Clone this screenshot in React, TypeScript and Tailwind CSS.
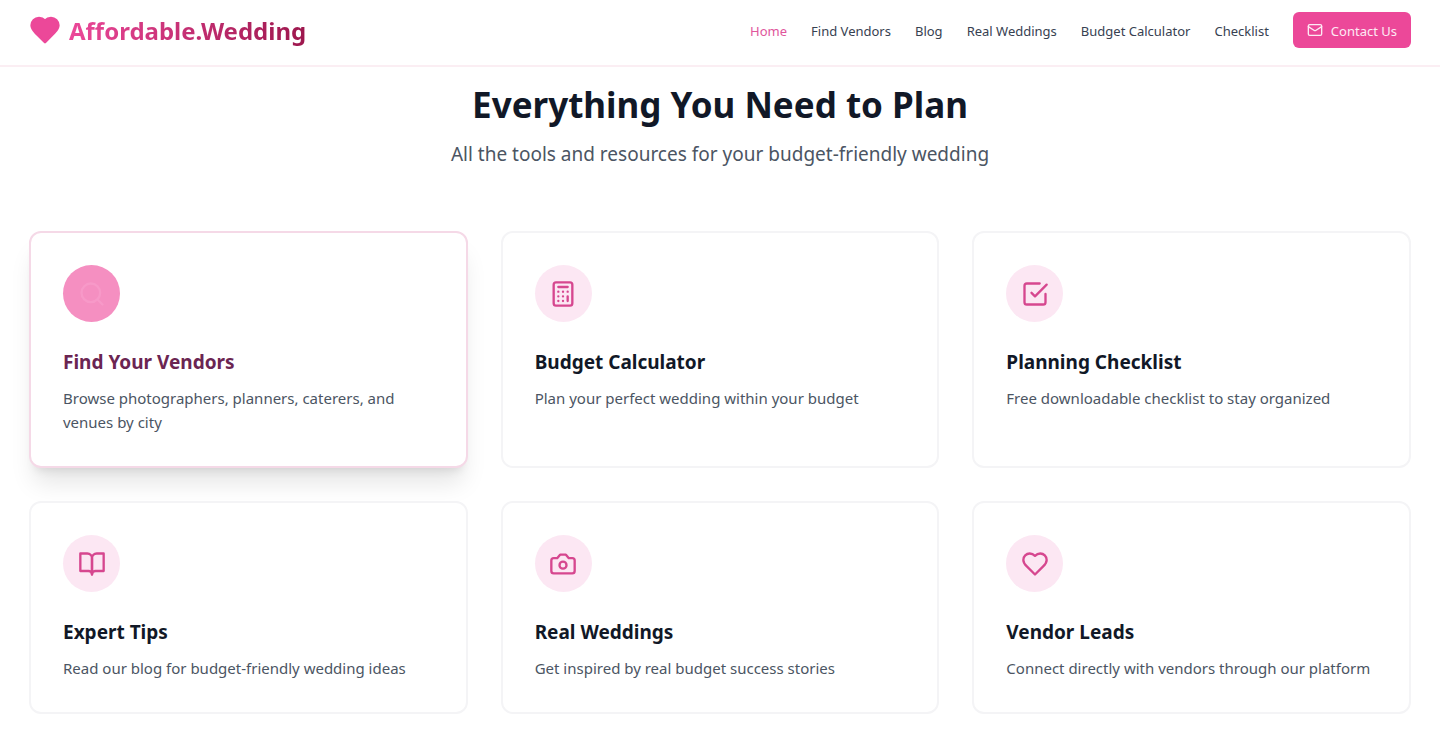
import type { ReactNode } from 'react'
import { clsx } from 'clsx'

type IconProps = { className?: string }

function Icon({ className, children }: { className?: string; children: ReactNode }) {
  return (
    <svg
      viewBox="0 0 24 24"
      fill="none"
      stroke="currentColor"
      strokeWidth="2"
      strokeLinecap="round"
      strokeLinejoin="round"
      aria-hidden="true"
      className={className}
    >
      {children}
    </svg>
  )
}

function Search({ className }: IconProps) {
  return (
    <Icon className={className}>
      <circle cx="11" cy="11" r="8" />
      <path d="m21 21-4.3-4.3" />
    </Icon>
  )
}

function Calculator({ className }: IconProps) {
  return (
    <Icon className={className}>
      <rect width="16" height="20" x="4" y="2" rx="2" />
      <path d="M8 6h8M16 14v4M16 10h.01M12 10h.01M8 10h.01M12 14h.01M8 14h.01M12 18h.01M8 18h.01" />
    </Icon>
  )
}

function CheckSquare({ className }: IconProps) {
  return (
    <Icon className={className}>
      <path d="m9 11 3 3L22 4" />
      <path d="M21 12v7a2 2 0 0 1-2 2H5a2 2 0 0 1-2-2V5a2 2 0 0 1 2-2h11" />
    </Icon>
  )
}

function BookOpen({ className }: IconProps) {
  return (
    <Icon className={className}>
      <path d="M2 3h6a4 4 0 0 1 4 4v14a3 3 0 0 0-3-3H2z" />
      <path d="M22 3h-6a4 4 0 0 0-4 4v14a3 3 0 0 1 3-3h7z" />
    </Icon>
  )
}

function Camera({ className }: IconProps) {
  return (
    <Icon className={className}>
      <path d="M14.5 4h-5L7 7H4a2 2 0 0 0-2 2v9a2 2 0 0 0 2 2h16a2 2 0 0 0 2-2V9a2 2 0 0 0-2-2h-3l-2.5-3z" />
      <circle cx="12" cy="13" r="3" />
    </Icon>
  )
}

function Heart({ className }: IconProps) {
  return (
    <Icon className={className}>
      <path d="M19 14c1.49-1.46 3-3.21 3-5.5A5.5 5.5 0 0 0 16.5 3c-1.76 0-3 .5-4.5 2-1.5-1.5-2.74-2-4.5-2A5.5 5.5 0 0 0 2 8.5c0 2.3 1.5 4.05 3 5.5l7 7Z" />
    </Icon>
  )
}

function Mail({ className }: IconProps) {
  return (
    <Icon className={className}>
      <rect width="20" height="16" x="2" y="4" rx="2" />
      <path d="m22 7-8.97 5.7a1.94 1.94 0 0 1-2.06 0L2 7" />
    </Icon>
  )
}

const navLinks = [
  { label: 'Home', href: '#home', active: true },
  { label: 'Find Vendors', href: '#vendors' },
  { label: 'Blog', href: '#blog' },
  { label: 'Real Weddings', href: '#real-weddings' },
  { label: 'Budget Calculator', href: '#budget' },
  { label: 'Checklist', href: '#checklist' },
]

type Feature = {
  icon: (props: IconProps) => ReactNode
  title: string
  description: string
  href: string
  highlighted?: boolean
}

const features: Feature[] = [
  {
    icon: Search,
    title: 'Find Your Vendors',
    description: 'Browse photographers, planners, caterers, and venues by city',
    href: '#vendors',
    highlighted: true,
  },
  {
    icon: Calculator,
    title: 'Budget Calculator',
    description: 'Plan your perfect wedding within your budget',
    href: '#budget',
  },
  {
    icon: CheckSquare,
    title: 'Planning Checklist',
    description: 'Free downloadable checklist to stay organized',
    href: '#checklist',
  },
  {
    icon: BookOpen,
    title: 'Expert Tips',
    description: 'Read our blog for budget-friendly wedding ideas',
    href: '#blog',
  },
  {
    icon: Camera,
    title: 'Real Weddings',
    description: 'Get inspired by real budget success stories',
    href: '#real-weddings',
  },
  {
    icon: Heart,
    title: 'Vendor Leads',
    description: 'Connect directly with vendors through our platform',
    href: '#leads',
  },
]

function Header() {
  return (
    <header className="border-b-2 border-[#fbeef3] bg-white">
      <div className="flex items-center justify-between px-[29px] pt-3 pb-[17px]">
        <a href="#home" className="flex items-center gap-2">
          <Heart className="h-8 w-8 fill-[#ec4899] text-[#ec4899]" />
          <span className="bg-linear-to-r/srgb from-[#ec4899] to-[#9d174d] bg-clip-text pt-0.5 text-[24px] leading-8 font-bold text-transparent">
            Affordable.Wedding
          </span>
        </a>
        <div className="flex items-center gap-6">
          <nav className="flex items-center gap-6 pt-0.5 text-[13px] leading-5">
            {navLinks.map((link) => (
              <a
                key={link.label}
                href={link.href}
                className={clsx('whitespace-nowrap', link.active ? 'text-[#e0569c]' : 'text-[#374151]')}
              >
                {link.label}
              </a>
            ))}
          </nav>
          <button
            type="button"
            className="flex h-9 items-center gap-2 rounded-md bg-[#ec4899] px-3.5 text-[13px] leading-5 whitespace-nowrap text-[#fdeaf4]"
          >
            <Mail className="h-4 w-4" />
            <span className="pt-0.5">Contact Us</span>
          </button>
        </div>
      </div>
    </header>
  )
}

function FeatureCard({ icon: FeatureIcon, title, description, href, highlighted }: Feature) {
  return (
    <a
      href={href}
      className={clsx(
        'block rounded-xl border-2 bg-white p-8',
        highlighted ? 'border-[#f5d9e7] shadow-xl' : 'border-[#f4f4f6]'
      )}
    >
      <div
        className={clsx(
          'mb-6 flex h-[57px] w-[57px] items-center justify-center rounded-full',
          highlighted ? 'bg-[#f58fc1]' : 'bg-[#fce7f3]'
        )}
      >
        <FeatureIcon className={clsx('h-7 w-7', highlighted ? 'text-[#f799c8]' : 'text-[#d6478f]')} />
      </div>
      <h3 className={clsx('mb-2 text-[19px] leading-8 font-bold', highlighted ? 'text-[#6b2552]' : 'text-[#111827]')}>
        {title}
      </h3>
      <p className="text-[15px] leading-6 text-[#4b5563]">{description}</p>
    </a>
  )
}

export default function App() {
  return (
    <div className="min-h-screen bg-white font-['Noto_Sans',sans-serif]">
      <Header />
      <main className="px-[29px] pt-[18px] pb-4">
        <div className="mb-[63px] text-center">
          <h2 className="mb-[15px] text-[35px] leading-10 font-bold text-[#111827]">Everything You Need to Plan</h2>
          <p className="text-[19px] leading-7 text-[#4b5563]">
            All the tools and resources for your budget-friendly wedding
          </p>
        </div>
        <div className="grid grid-cols-3 gap-[33px]">
          {features.map((feature) => (
            <FeatureCard key={feature.title} {...feature} />
          ))}
        </div>
      </main>
    </div>
  )
}
